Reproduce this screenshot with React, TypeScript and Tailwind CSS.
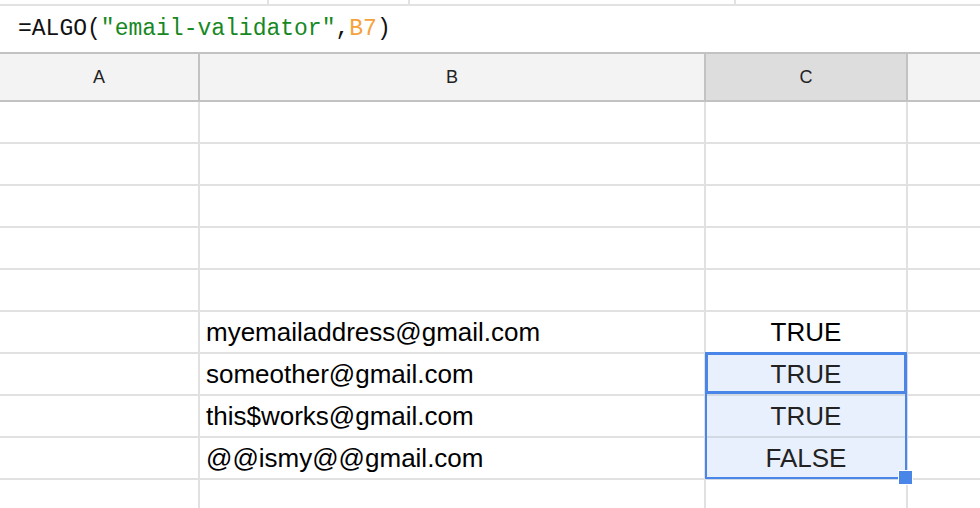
const emails: Record<number, [string, string]> = {
  7: ["myemailaddress@gmail.com", "TRUE"],
  8: ["someother@gmail.com", "TRUE"],
  9: ["this$works@gmail.com", "TRUE"],
  10: ["@@ismy@@gmail.com", "FALSE"],
};

const selected = [8, 9, 10];

export default function App() {
  const rows = [2, 3, 4, 5, 6, 7, 8, 9, 10, 11];
  return (
    <div className="relative w-[980px] h-[508px] overflow-hidden bg-white font-['Liberation_Sans',Arial,sans-serif]">
      {/* sliver of the toolbar above */}
      <div className="flex h-[6px] border-b-2 border-[#e2e2e2]">
        <div className="w-[269px] border-r-2 border-[#e2e2e2]"></div>
        <div className="w-[141px] border-r-2 border-[#e2e2e2]"></div>
        <div className="w-[326px] border-r-2 border-[#e2e2e2]"></div>
      </div>

      {/* formula bar */}
      <div className="h-[46px] flex items-center pl-[18px] font-['Liberation_Mono',Menlo,monospace] text-[23px] text-[#111]">
        <span>=ALGO(</span>
        <span className="text-[#16881f]">"email-validator"</span>
        <span>,</span>
        <span className="text-[#f6a23c]">B7</span>
        <span>)</span>
      </div>

      {/* column headers */}
      <div className="grid grid-cols-[200px_506px_202px_1fr] h-[50px] border-y-2 border-[#c2c2c2] bg-[#f3f3f3] text-[18px] text-[#222]">
        <div className="flex items-center justify-center border-r-2 border-[#c2c2c2]">A</div>
        <div className="flex items-center justify-center border-r-2 border-[#c2c2c2]">B</div>
        <div className="flex items-center justify-center border-r-2 border-[#c2c2c2] bg-[#dddddd]">C</div>
        <div></div>
      </div>

      {/* cells */}
      <div className="flex flex-col text-[26px] text-black">
        {rows.map((r) => {
          const data = emails[r];
          const isSel = selected.includes(r);
          return (
            <div key={r} className="grid grid-cols-[200px_506px_202px_1fr] h-[42px]">
              <div className="border-r-2 border-b-2 border-[#e1e1e1]"></div>
              <div className="border-r-2 border-b-2 border-[#e1e1e1] flex items-center pl-[6px]">
                {data ? data[0] : ""}
              </div>
              <div
                className={
                  isSel
                    ? "border-r-2 border-b-2 border-[#d3d9e3] bg-[#e8f0fd] flex items-center justify-center text-[#222]"
                    : "border-r-2 border-b-2 border-[#e1e1e1] flex items-center justify-center"
                }
              >
                {data ? data[1] : ""}
              </div>
              <div className="border-b-2 border-[#e1e1e1]"></div>
            </div>
          );
        })}
      </div>

      {/* selection range */}
      <div className="absolute left-[705px] top-[352px] w-[202px] h-[127px] border-2 border-[#4a86e8] pointer-events-none"></div>
      <div className="absolute left-[705px] top-[352px] w-[202px] h-[42px] border-[3px] border-[#4a86e8] pointer-events-none"></div>
      <div className="absolute left-[898px] top-[470px] w-[15px] h-[15px] bg-[#4a86e8] border border-white"></div>
    </div>
  );
}
